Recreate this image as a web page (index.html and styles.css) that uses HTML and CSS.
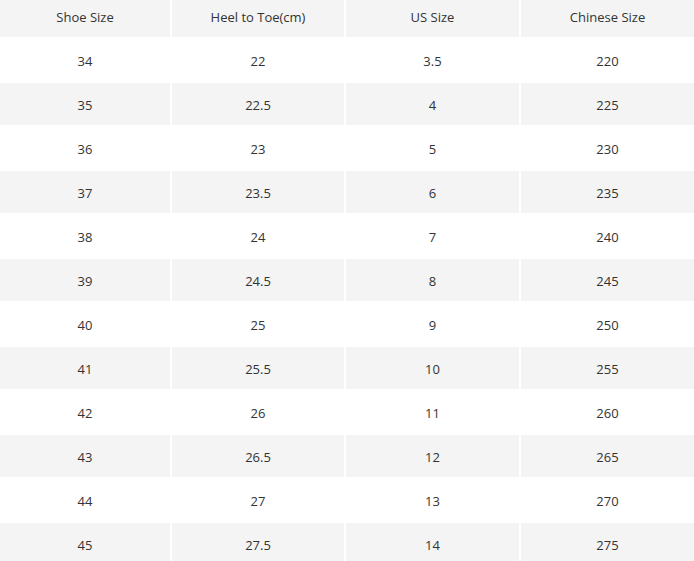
FILE: index.html
```html
<!DOCTYPE html>
<html>
<head>
<meta charset="utf-8">
<link rel="stylesheet" href="styles.css">
</head>
<body>
<div class="size-table">
  <div class="cell head">Shoe Size</div><div class="cell head">Heel to Toe(cm)</div><div class="cell head">US Size</div><div class="cell head">Chinese Size</div>
  <div class="cell">34</div><div class="cell">22</div><div class="cell">3.5</div><div class="cell">220</div>
  <div class="cell alt">35</div><div class="cell alt">22.5</div><div class="cell alt">4</div><div class="cell alt">225</div>
  <div class="cell">36</div><div class="cell">23</div><div class="cell">5</div><div class="cell">230</div>
  <div class="cell alt">37</div><div class="cell alt">23.5</div><div class="cell alt">6</div><div class="cell alt">235</div>
  <div class="cell">38</div><div class="cell">24</div><div class="cell">7</div><div class="cell">240</div>
  <div class="cell alt">39</div><div class="cell alt">24.5</div><div class="cell alt">8</div><div class="cell alt">245</div>
  <div class="cell">40</div><div class="cell">25</div><div class="cell">9</div><div class="cell">250</div>
  <div class="cell alt">41</div><div class="cell alt">25.5</div><div class="cell alt">10</div><div class="cell alt">255</div>
  <div class="cell">42</div><div class="cell">26</div><div class="cell">11</div><div class="cell">260</div>
  <div class="cell alt">43</div><div class="cell alt">26.5</div><div class="cell alt">12</div><div class="cell alt">265</div>
  <div class="cell">44</div><div class="cell">27</div><div class="cell">13</div><div class="cell">270</div>
  <div class="cell alt">45</div><div class="cell alt">27.5</div><div class="cell alt">14</div><div class="cell alt">275</div>
</div>
</body>
</html>
```
FILE: styles.css
```css
html, body {
  margin: 0;
  padding: 0;
  background: #ffffff;
}
body {
  font-family: "Open Sans", "Liberation Sans", sans-serif;
  font-size: 13px;
  color: #333333;
  overflow: hidden;
}
.size-table {
  display: grid;
  grid-template-columns: 170px 172px 173px 173px;
  grid-template-rows: 37px;
  grid-auto-rows: 42px;
  gap: 2px;
  width: 694px;
}
.cell {
  display: flex;
  align-items: center;
  justify-content: center;
  background: #ffffff;
  padding-top: 2px;
  box-sizing: border-box;
}
.cell.head {
  padding-top: 0;
  padding-bottom: 3px;
}
.cell.head,
.cell.alt {
  background: #f4f4f4;
}
```
